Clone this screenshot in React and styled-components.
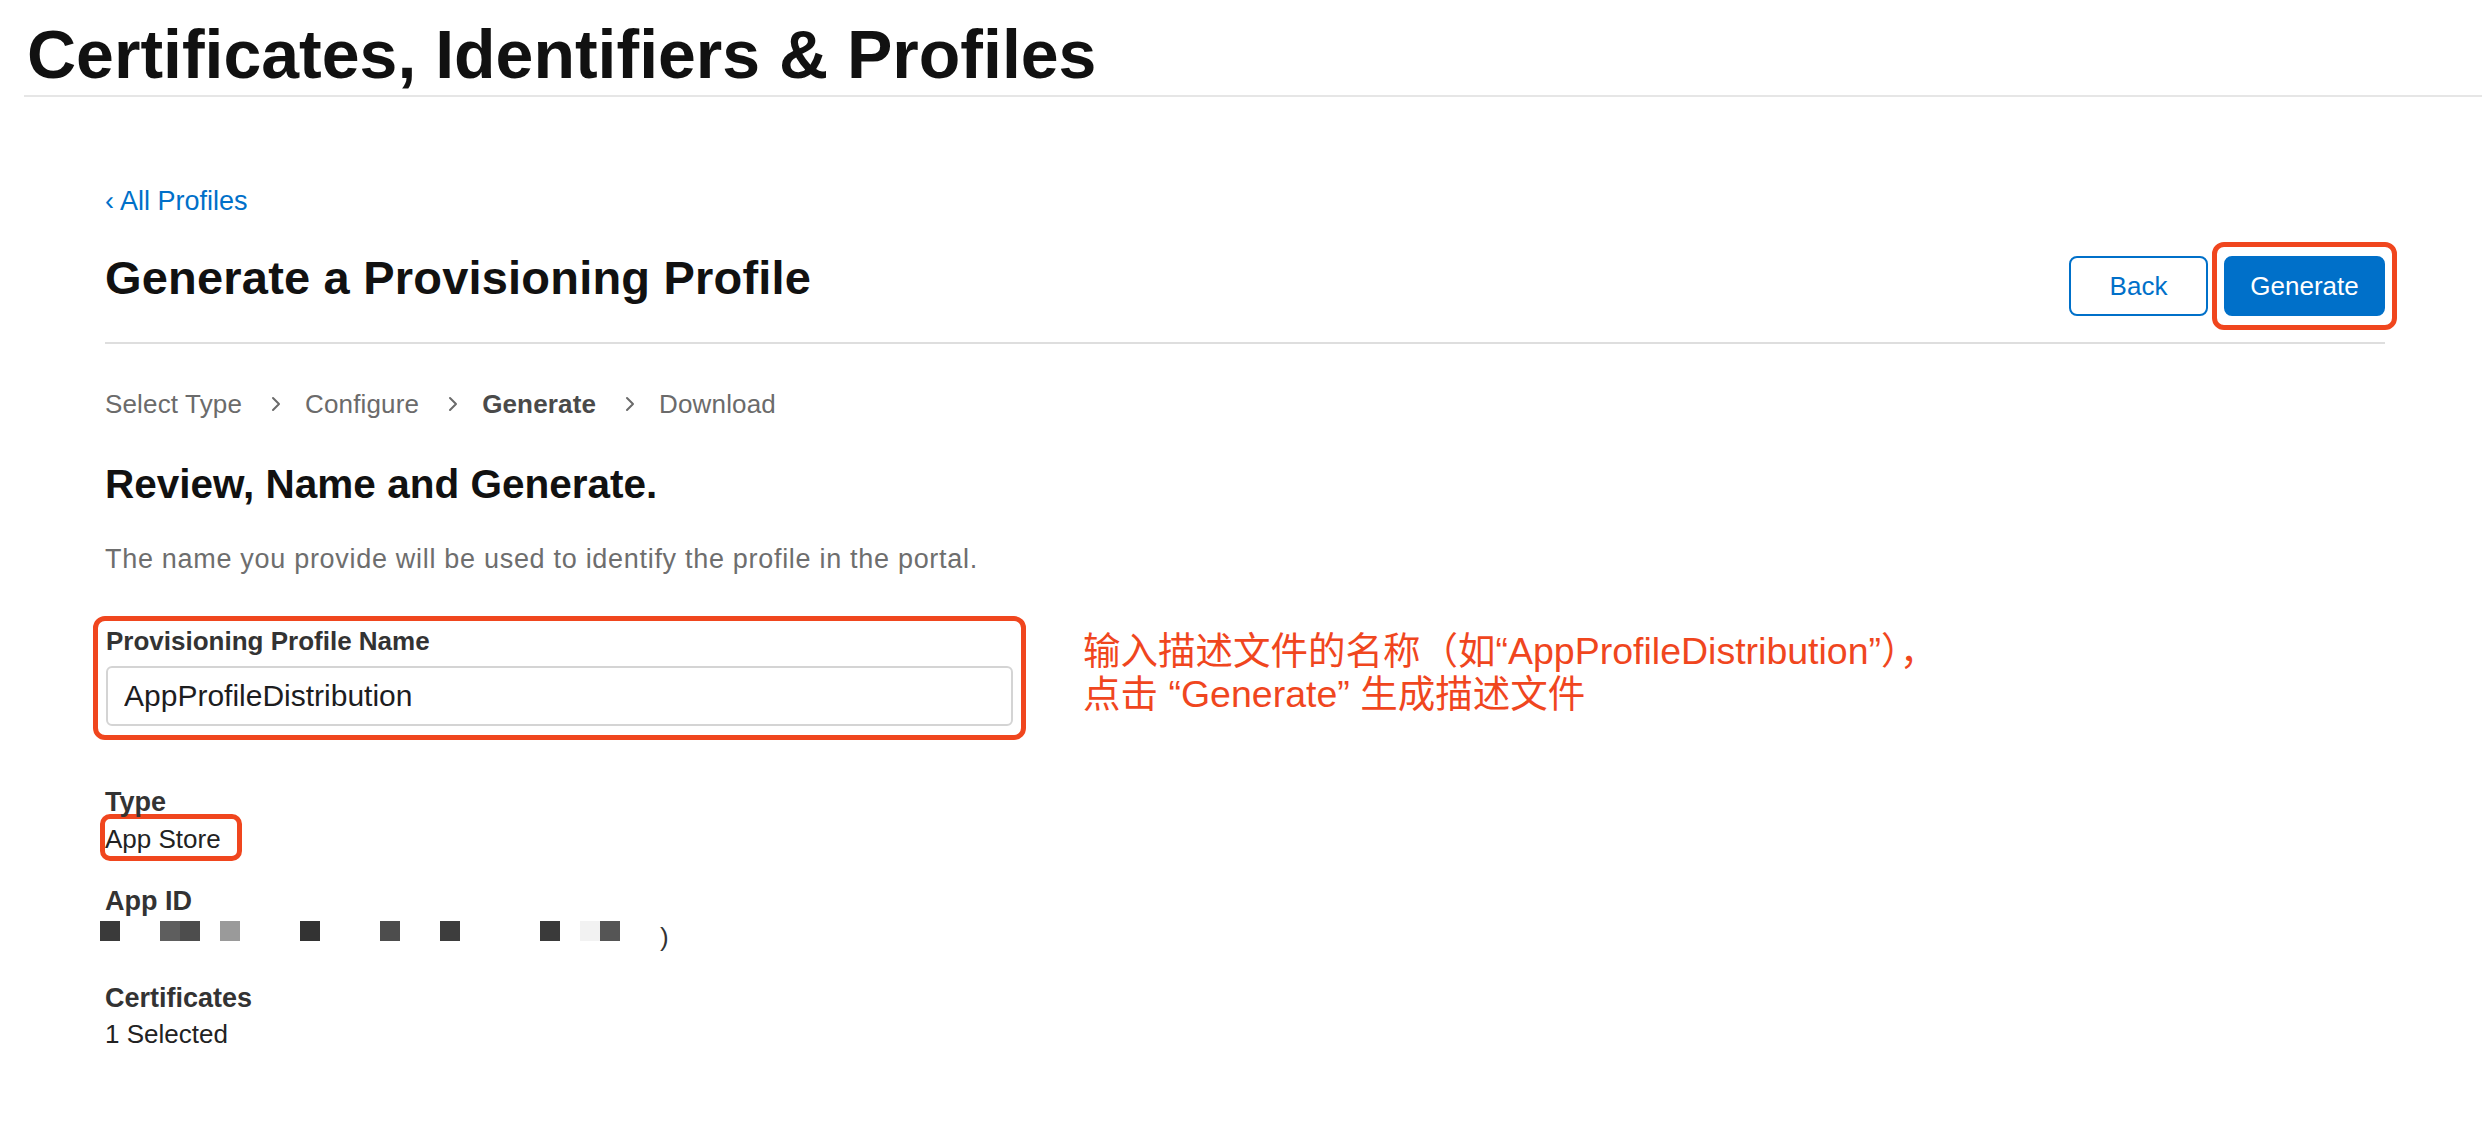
import React from 'react';
import styled, { createGlobalStyle } from 'styled-components';

const RED = '#f0461e';
const BLUE = '#0070c9';

const GlobalStyle = createGlobalStyle`
  html, body {
    margin: 0;
    padding: 0;
    background: #fff;
  }
  body {
    font-family: "Liberation Sans", Arial, "Noto Sans CJK SC", sans-serif;
    color: #1d1d1f;
  }
`;

const TopBar = styled.header`
  margin-left: 24px;
  padding: 16px 0 3px 3px;
  border-bottom: 2px solid #e6e6e6;
`;

const PageTitle = styled.h1`
  margin: 0;
  font-size: 68px;
  line-height: 76px;
  font-weight: 700;
  color: #111;
`;

const Main = styled.main`
  margin: 0 97px 0 105px;
`;

const BackLink = styled.a`
  display: block;
  margin-top: 89px;
  font-size: 27px;
  line-height: 30px;
  color: ${BLUE};
  text-decoration: none;
`;

const HeaderRow = styled.div`
  display: flex;
  justify-content: space-between;
  align-items: flex-start;
  padding-bottom: 26px;
  border-bottom: 2px solid #dedede;
`;

const Heading = styled.h2`
  margin: 34px 0 0;
  font-size: 47px;
  line-height: 56px;
  font-weight: 700;
  letter-spacing: 0.2px;
  color: #111;
`;

const Actions = styled.div`
  display: flex;
  align-items: center;
  gap: 4px;
  margin-top: 40px;
`;

const Button = styled.button`
  box-sizing: border-box;
  width: ${p => p.$w}px;
  height: 60px;
  border: 2px solid ${BLUE};
  border-radius: 8px;
  background: ${p => (p.$primary ? BLUE : '#fff')};
  color: ${p => (p.$primary ? '#fff' : BLUE)};
  font-family: inherit;
  font-size: 26px;
  cursor: pointer;
`;

const ButtonCallout = styled.div`
  border: 5px solid ${RED};
  border-radius: 12px;
  padding: 9px 7px;
  margin: -14px -12px -14px 0;
`;

const Steps = styled.nav`
  display: flex;
  align-items: center;
  margin-top: 45px;
  font-size: 26px;
  line-height: 30px;
  letter-spacing: 0.15px;
  color: #6b6b6b;
`;

const Step = styled.span`
  font-weight: ${p => (p.$current ? 700 : 400)};
  color: ${p => (p.$current ? '#4a4a4a' : '#6b6b6b')};
`;

const Chevron = styled.svg`
  width: 10px;
  height: 16px;
  margin: 0 24px 0 29px;
`;

const SectionTitle = styled.h3`
  margin: 42px 0 0;
  font-size: 40.5px;
  line-height: 46px;
  font-weight: 700;
  color: #111;
`;

const Hint = styled.p`
  margin: 37px 0 0;
  font-size: 27px;
  line-height: 30px;
  letter-spacing: 0.7px;
  color: #6e6e6e;
`;

const NameRow = styled.div`
  display: flex;
  align-items: flex-start;
  margin: 42px 0 0 -12px;
`;

const NameCallout = styled.div`
  box-sizing: border-box;
  width: 933px;
  border: 5px solid ${RED};
  border-radius: 12px;
  padding: 6px 8px 9px 8px;
`;

const FieldLabel = styled.label`
  display: block;
  font-size: ${p => p.$size || 26}px;
  line-height: 28px;
  font-weight: 700;
  color: #333;
  margin-top: ${p => p.$top || 0}px;
`;

const TextInput = styled.input`
  display: block;
  box-sizing: border-box;
  width: 100%;
  height: 60px;
  margin-top: 11px;
  padding: 0 16px;
  border: 2px solid #d4d4d4;
  border-radius: 6px;
  font-family: inherit;
  font-size: 30px;
  color: #1d1d1f;
  outline: none;
`;

const Annotation = styled.div`
  margin: 14px 0 0 57px;
  color: ${RED};
  font-family: "Liberation Sans", "Noto Sans CJK SC", sans-serif;
  font-size: 37.5px;
  line-height: 43px;
`;

const Value = styled.div`
  font-size: 26px;
  line-height: 30px;
  color: #222;
  margin-top: ${p => p.$top || 0}px;
`;

const ValueCallout = styled.div`
  width: fit-content;
  margin: -2px 0 0 -5px;
  border: 5px solid ${RED};
  border-radius: 10px;
  padding: 5px 16px 2px 0;
`;

const Mosaic = styled.div`
  display: grid;
  grid-template-columns: repeat(29, 20px);
  grid-auto-rows: 20px;
  margin: 6px 0 0 -5px;
`;

const Block = styled.span`
  grid-row: 1;
  grid-column: ${p => p.$col + 1};
  background: ${p => p.$color};
`;

const Paren = styled.span`
  grid-row: 1;
  grid-column: 29;
  font-size: 26px;
  line-height: 28px;
  color: #333;
  margin-top: 2px;
`;

const mosaic = [
  [0, '#3a3a3a'],
  [3, '#5e5e5e'],
  [4, '#4d4d4d'],
  [6, '#9a9a9a'],
  [10, '#333333'],
  [14, '#4d4d4d'],
  [17, '#3d3d3d'],
  [22, '#3a3a3a'],
  [24, '#f2f2f2'],
  [25, '#555555'],
];

const steps = ['Select Type', 'Configure', 'Generate', 'Download'];

export default function App() {
  return (
    <>
      <GlobalStyle />
      <TopBar>
        <PageTitle>Certificates, Identifiers &amp; Profiles</PageTitle>
      </TopBar>
      <Main>
        <BackLink href="#">‹ All Profiles</BackLink>
        <HeaderRow>
          <Heading>Generate a Provisioning Profile</Heading>
          <Actions>
            <Button $w={139}>Back</Button>
            <ButtonCallout>
              <Button $w={161} $primary>Generate</Button>
            </ButtonCallout>
          </Actions>
        </HeaderRow>

        <Steps>
          {steps.map((s, i) => (
            <React.Fragment key={s}>
              {i > 0 && (
                <Chevron viewBox="0 0 10 16">
                  <polyline points="2,2 8,8 2,14" fill="none" stroke="#6b6b6b" strokeWidth="2" strokeLinecap="round" strokeLinejoin="round" />
                </Chevron>
              )}
              <Step $current={s === 'Generate'}>{s}</Step>
            </React.Fragment>
          ))}
        </Steps>

        <SectionTitle>Review, Name and Generate.</SectionTitle>
        <Hint>The name you provide will be used to identify the profile in the portal.</Hint>

        <NameRow>
          <NameCallout>
            <FieldLabel>Provisioning Profile Name</FieldLabel>
            <TextInput readOnly value="AppProfileDistribution" />
          </NameCallout>
          <Annotation>
            输入描述文件的名称（如“AppProfileDistribution”），
            <br />
            点击 “Generate” 生成描述文件
          </Annotation>
        </NameRow>

        <FieldLabel $top={48} $size={27}>Type</FieldLabel>
        <ValueCallout>
          <Value>App Store</Value>
        </ValueCallout>

        <FieldLabel $top={26} $size={27}>App ID</FieldLabel>
        <Mosaic>
          {mosaic.map(([col, color]) => (
            <Block key={col} $col={col} $color={color} />
          ))}
          <Paren>)</Paren>
        </Mosaic>

        <FieldLabel $top={43} $size={27}>Certificates</FieldLabel>
        <Value $top={7}>1 Selected</Value>
      </Main>
    </>
  );
}
